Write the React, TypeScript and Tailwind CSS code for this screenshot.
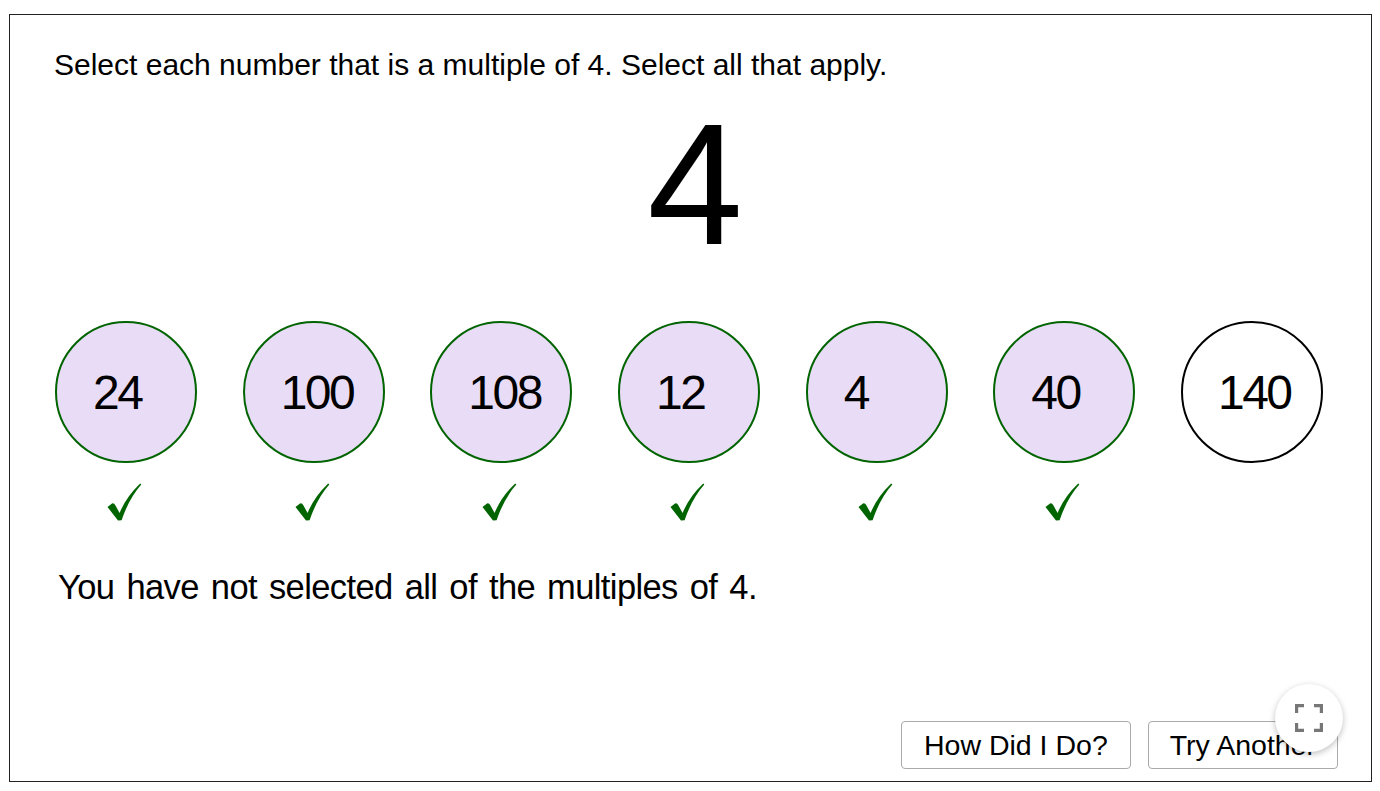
import React from "react";

const items = [
  { n: "24", sel: true },
  { n: "100", sel: true },
  { n: "108", sel: true },
  { n: "12", sel: true },
  { n: "4", sel: true },
  { n: "40", sel: true },
  { n: "140", sel: false },
];

function Check() {
  return (
    <svg width="35" height="38" viewBox="0 0 35 38" className="block">
      <path
        d="M0.5 24 L5 20.5 Q7 19.8 8.6 22.8 L12.6 30 Q19 14 33.2 0.5 L34.3 1.6 Q22 15.5 14.6 37.2 L11 37.6 Z"
        fill="#006400"
      />
    </svg>
  );
}

function FullscreenIcon() {
  return (
    <svg width="28" height="28" viewBox="0 0 28 28" fill="none" stroke="#777" strokeWidth="3.2">
      <path d="M1.6 9 V1.6 H9" />
      <path d="M19 1.6 H26.4 V9" />
      <path d="M26.4 19 V26.4 H19" />
      <path d="M9 26.4 H1.6 V19" />
    </svg>
  );
}

export default function App() {
  return (
    <div className="w-[1380px] h-[791px] bg-white overflow-hidden">
      <div className="ml-[9px] mt-[14px] w-[1363px] h-[768px] border border-[#222] relative flex flex-col">
        <div
          className="pl-[44px] pt-[33px] text-[30px] leading-[34px] text-black"
          style={{ fontFamily: '"Liberation Sans", Arial, sans-serif' }}
        >
          Select each number that is a multiple of 4. Select all that apply.
        </div>
        <div
          className="flex justify-center pl-[9px] mt-[16px] h-[180px] text-[172px] leading-[172px] text-black"
          style={{ fontFamily: '"Liberation Sans", Arial, sans-serif' }}
        >
          4
        </div>
        <div className="flex pl-[45px] gap-[45.67px] mt-[43px]">
          {items.map((it) => (
            <div key={it.n} className="flex flex-col items-start w-[142px]">
              <div
                className={
                  it.sel
                    ? "w-[142px] h-[142px] rounded-full border-[2.5px] border-[#006400] bg-[#e9dcf6] flex items-center pl-[36px] pt-[2px]"
                    : "w-[142px] h-[142px] rounded-full border-[2.5px] border-black bg-white flex items-center pl-[35px] pt-[2px]"
                }
              >
                <span
                  className="text-[48px] leading-none tracking-[-2.5px] text-black"
                  style={{ fontFamily: '"Liberation Sans", Arial, sans-serif' }}
                >
                  {it.n}
                </span>
              </div>
              <div className="h-[58px] pl-[52px] pt-[20px]">{it.sel ? <Check /> : null}</div>
            </div>
          ))}
        </div>
        <div
          className="pl-[48px] mt-[46px] text-[34.5px] leading-[40px] tracking-[-0.6px] text-black"
          style={{ fontFamily: '"Liberation Sans", Arial, sans-serif', wordSpacing: "3px" }}
        >
          You have not selected all of the multiples of 4.
        </div>
        <div className="mt-auto flex justify-end gap-[17px] pr-[33px] pb-[12px]">
          <button
            className="h-[48px] px-[22px] border border-[#aaa] rounded-[4px] bg-white text-[28.5px] text-black"
            style={{ fontFamily: '"Liberation Sans", Arial, sans-serif' }}
          >
            How Did I Do?
          </button>
          <button
            className="h-[48px] px-[21px] border border-[#aaa] rounded-[4px] bg-white text-[28.5px] text-black"
            style={{ fontFamily: '"Liberation Sans", Arial, sans-serif' }}
          >
            Try Another
          </button>
        </div>
        <div className="absolute right-[28px] bottom-[29px] w-[68px] h-[68px] rounded-full bg-white shadow-[0_2px_6px_rgba(0,0,0,0.25)] flex items-center justify-center">
          <FullscreenIcon />
        </div>
      </div>
    </div>
  );
}
